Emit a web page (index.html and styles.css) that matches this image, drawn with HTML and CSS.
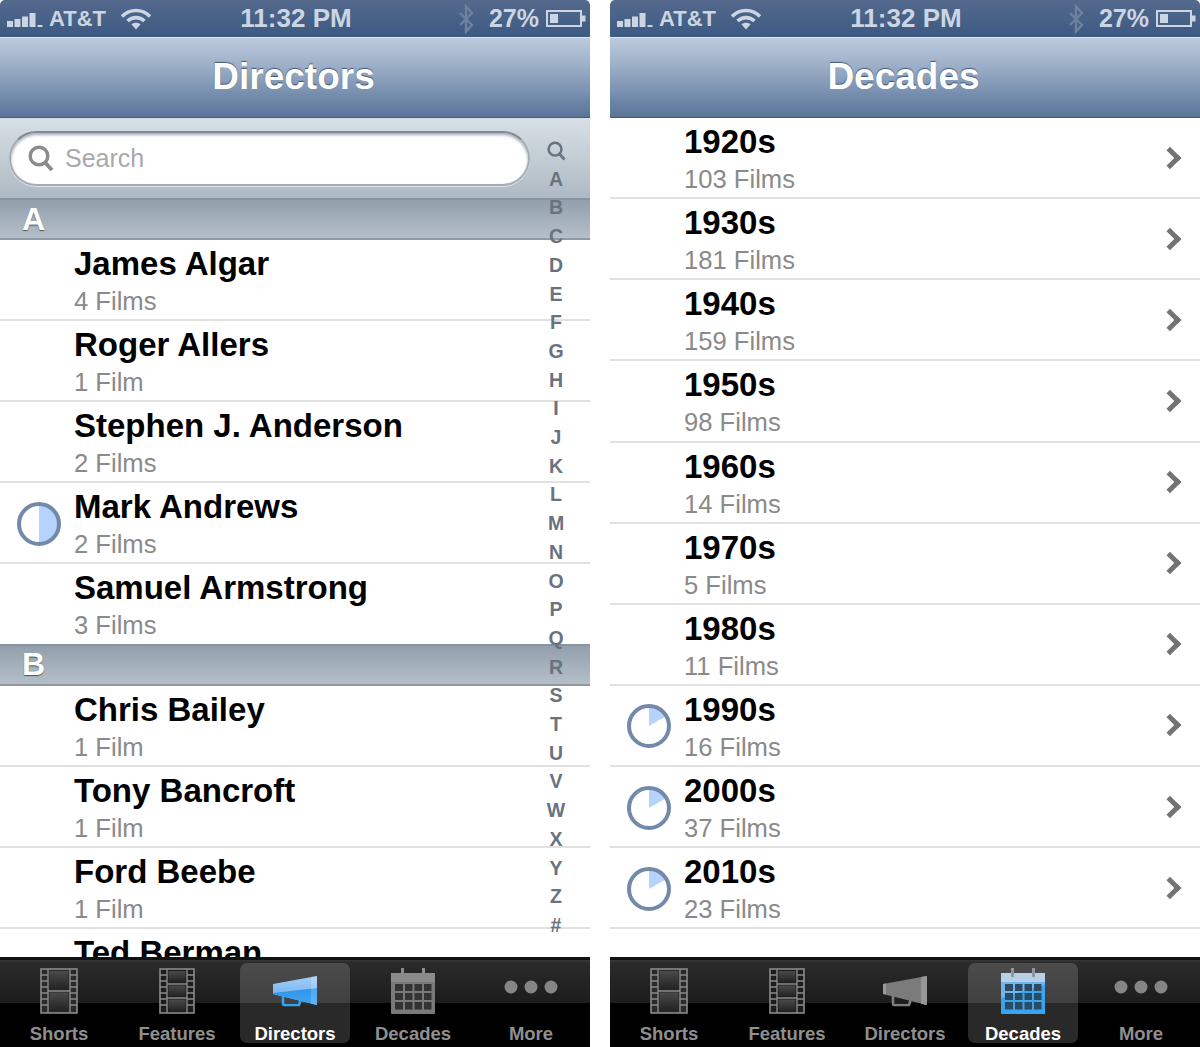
FILE: index.html
```html
<!DOCTYPE html>
<html lang="en">
<head>
<meta charset="utf-8">
<title>Directors and Decades</title>
<link rel="stylesheet" href="styles.css">
</head>
<body>
<svg class="sprite" width="0" height="0" aria-hidden="true">
  <defs>
    <linearGradient id="blue" x1="0" y1="0" x2="0" y2="1">
      <stop offset="0" stop-color="#a3cdf6"/><stop offset="1" stop-color="#62abf0"/>
    </linearGradient>
    <linearGradient id="blue2" x1="0" y1="0" x2="0" y2="1">
      <stop offset="0" stop-color="#2f93ec"/><stop offset="1" stop-color="#3fa6ef"/>
    </linearGradient>
    <linearGradient id="cell" x1="0" y1="0" x2="0" y2="1">
      <stop offset="0" stop-color="#4a4a4a"/><stop offset="1" stop-color="#222"/>
    </linearGradient>
    <symbol id="signal" viewBox="0 0 36 14">
      <rect x="0" y="8" width="6" height="6"/><rect x="7.5" y="6" width="6" height="8"/><rect x="15" y="3.5" width="6" height="10.5"/><rect x="22.5" y="0" width="6" height="14"/><rect x="30.5" y="12" width="5" height="2"/>
    </symbol>
    <symbol id="wifi" viewBox="0 0 30 22">
      <path d="M1 8.500C9 .5 21 .5 29 8.500" fill="none" stroke="currentColor" stroke-width="3.600"/>
      <path d="M6.500 13C11.500 8.500 18.500 8.500 23.500 13" fill="none" stroke="currentColor" stroke-width="3.600"/>
      <path d="M15 21.500l-4.600-5.200c2.700-2 6.500-2 9.200 0z" fill="currentColor"/>
    </symbol>
    <symbol id="bt" viewBox="0 0 16 28">
      <path d="M2 8l12 12-6 6.500V1.500l6 6.500L2 20" fill="none" stroke="currentColor" stroke-width="2.400"/>
    </symbol>
    <symbol id="battery" viewBox="0 0 40 17">
      <rect x="1" y="1" width="34" height="15" fill="none" stroke="currentColor" stroke-width="2"/>
      <rect x="4" y="4" width="8" height="9" fill="currentColor"/>
      <rect x="36" y="5.500" width="3.500" height="6" fill="currentColor"/>
    </symbol>
    <symbol id="film2" viewBox="0 0 38 46">
      <rect x="1" y="1" width="36" height="44" fill="#2a2a2a" stroke="#8a8a8a" stroke-width="1.600"/>
      <path d="M8 1v44M30 1v44M1 7h7M1 13h7M1 19h7M1 25h7M1 31h7M1 37h7M30 7h7M30 13h7M30 19h7M30 25h7M30 31h7M30 37h7M8 23h22" stroke="#8a8a8a" stroke-width="1.400" fill="none"/>
      <rect x="9.500" y="3" width="19" height="18.500" fill="url(#cell)"/>
      <rect x="9.500" y="24.500" width="19" height="18.500" fill="url(#cell)"/>
    </symbol>
    <symbol id="film3" viewBox="0 0 36 46">
      <rect x="1" y="1" width="34" height="44" fill="#1c1c1c" stroke="#8a8a8a" stroke-width="1.600"/>
      <path d="M8 1v44M28 1v44M1 7h7M1 13h7M1 19h7M1 25h7M1 31h7M1 37h7M28 7h7M28 13h7M28 19h7M28 25h7M28 31h7M28 37h7M8 16h20M8 30h20" stroke="#8a8a8a" stroke-width="1.400" fill="none"/>
      <rect x="9.500" y="3" width="17" height="11.500" fill="url(#cell)"/>
      <rect x="9.500" y="17.500" width="17" height="11" fill="url(#cell)"/>
      <rect x="9.500" y="31.500" width="17" height="12" fill="url(#cell)"/>
    </symbol>
    <symbol id="horn-off" viewBox="0 0 46 32">
      <path d="M11 20v9a1 1 0 0 0 1 1h15l2-6" fill="none" stroke="#7d7d7d" stroke-width="2.600"/>
      <path d="M1 9l44-8v29L1 19z" fill="#7b7b7b"/>
      <path d="M1 9l3-.5V19.600L1 19z" fill="#999"/>
      <path d="M39 2.100l6-1.100v29l-6-1.100z" fill="#979797"/>
    </symbol>
    <symbol id="horn-on" viewBox="0 0 46 32">
      <path d="M11 20v9a1 1 0 0 0 1 1h15l2-6" fill="none" stroke="#35a2ee" stroke-width="2.600"/>
      <path d="M1 9l44-8v29L1 19z" fill="url(#blue)"/>
      <path d="M1 18L45 13v17L1 19z" fill="url(#blue2)"/>
      <path d="M39 2.100l6-1.100v29l-6-1.100z" fill="#fff" opacity=".18"/>
    </symbol>
    <symbol id="cal-off" viewBox="0 0 44 46">
      <rect x="0" y="5" width="44" height="41" rx="1" fill="#797979"/>
      <rect x="0" y="5" width="44" height="9" fill="#8a8a8a"/>
      <rect x="10" y="0" width="3" height="9" fill="#8c8c8c"/><rect x="31" y="0" width="3" height="9" fill="#8c8c8c"/>
      <g fill="#333"><rect x="4" y="16" width="8" height="7"/><rect x="14" y="16" width="7.500" height="7"/><rect x="23.500" y="16" width="7.500" height="7"/><rect x="33" y="16" width="7.500" height="7"/>
      <rect x="4" y="25" width="8" height="7"/><rect x="14" y="25" width="7.500" height="7"/><rect x="23.500" y="25" width="7.500" height="7"/><rect x="33" y="25" width="7.500" height="7"/>
      <rect x="4" y="34" width="8" height="7.500"/><rect x="14" y="34" width="7.500" height="7.500"/><rect x="23.500" y="34" width="7.500" height="7.500"/><rect x="33" y="34" width="7.500" height="7.500"/></g>
    </symbol>
    <symbol id="cal-on" viewBox="0 0 44 46">
      <rect x="0" y="5" width="44" height="41" rx="1" fill="#6fb5ee"/>
      <path d="M0 46V30L44 17v29z" fill="#3aa5ef"/>
      <rect x="0" y="5" width="44" height="9" fill="#b8cfe8"/>
      <rect x="10" y="0" width="3" height="9" fill="#8b97a6"/><rect x="31" y="0" width="3" height="9" fill="#8b97a6"/>
      <g fill="#2d4a63"><rect x="4" y="16" width="8" height="7"/><rect x="14" y="16" width="7.500" height="7"/><rect x="23.500" y="16" width="7.500" height="7"/><rect x="33" y="16" width="7.500" height="7"/>
      <rect x="4" y="25" width="8" height="7"/><rect x="14" y="25" width="7.500" height="7"/><rect x="23.500" y="25" width="7.500" height="7"/><rect x="33" y="25" width="7.500" height="7"/>
      <rect x="4" y="34" width="8" height="7.500"/><rect x="14" y="34" width="7.500" height="7.500"/><rect x="23.500" y="34" width="7.500" height="7.500"/><rect x="33" y="34" width="7.500" height="7.500"/></g>
    </symbol>
    <symbol id="dots" viewBox="0 0 54 14">
      <circle cx="7" cy="7" r="6.500" fill="#858585"/><circle cx="27" cy="7" r="6.500" fill="#858585"/><circle cx="47" cy="7" r="6.500" fill="#858585"/>
    </symbol>
    <symbol id="half" viewBox="0 0 44 44">
      <path d="M22 22V2a20 20 0 0 1 0 40z" fill="#b5d3fb"/>
      <circle cx="22" cy="22" r="20" fill="none" stroke="#7389ac" stroke-width="4"/>
    </symbol>
    <symbol id="slice" viewBox="0 0 44 44">
      <path d="M22 22V2A20 20 0 0 1 39.300 12z" fill="#b5d3fb"/>
      <circle cx="22" cy="22" r="20" fill="none" stroke="#7389ac" stroke-width="4"/>
    </symbol>
    <symbol id="lens" viewBox="0 0 26 27">
      <circle cx="11" cy="11" r="8.800" fill="none" stroke="currentColor" stroke-width="3.400"/>
      <path d="M17 17.500l7 7.500" stroke="currentColor" stroke-width="4" fill="none"/>
    </symbol>
  </defs>
</svg>

<main class="screens">
  <section class="phone">
    <header class="status">
      <div class="status-left">
        <svg class="i-signal"><use href="#signal"/></svg><span class="carrier">AT&amp;T</span><svg class="i-wifi"><use href="#wifi"/></svg>
      </div>
      <div class="time">11:32 PM</div>
      <div class="status-right">
        <svg class="i-bt"><use href="#bt"/></svg><span class="pct">27%</span><svg class="i-batt"><use href="#battery"/></svg>
      </div>
    </header>
    <div class="nav"><h1 class="nav-title">Directors</h1></div>
    <div class="list">
      <div class="searchbar">
        <div class="field"><svg class="i-lens"><use href="#lens"/></svg><span class="placeholder">Search</span></div>
      </div>
      <div class="section">A</div>
      <div class="row"><div class="slot"></div><div class="txt"><div class="title">James Algar</div><div class="sub">4 Films</div></div></div>
      <div class="row"><div class="slot"></div><div class="txt"><div class="title">Roger Allers</div><div class="sub">1 Film</div></div></div>
      <div class="row"><div class="slot"></div><div class="txt"><div class="title">Stephen J. Anderson</div><div class="sub">2 Films</div></div></div>
      <div class="row"><div class="slot"><svg class="pie"><use href="#half"/></svg></div><div class="txt"><div class="title">Mark Andrews</div><div class="sub">2 Films</div></div></div>
      <div class="row no-line"><div class="slot"></div><div class="txt"><div class="title">Samuel Armstrong</div><div class="sub">3 Films</div></div></div>
      <div class="section">B</div>
      <div class="row"><div class="slot"></div><div class="txt"><div class="title">Chris Bailey</div><div class="sub">1 Film</div></div></div>
      <div class="row"><div class="slot"></div><div class="txt"><div class="title">Tony Bancroft</div><div class="sub">1 Film</div></div></div>
      <div class="row"><div class="slot"></div><div class="txt"><div class="title">Ford Beebe</div><div class="sub">1 Film</div></div></div>
      <div class="row"><div class="slot"></div><div class="txt"><div class="title">Ted Berman</div><div class="sub">1 Film</div></div></div>
      <div class="index">
        <svg class="i-lens-sm"><use href="#lens"/></svg>
        <span>A</span><span>B</span><span>C</span><span>D</span><span>E</span><span>F</span><span>G</span><span>H</span><span>I</span><span>J</span><span>K</span><span>L</span><span>M</span><span>N</span><span>O</span><span>P</span><span>Q</span><span>R</span><span>S</span><span>T</span><span>U</span><span>V</span><span>W</span><span>X</span><span>Y</span><span>Z</span><span>#</span>
      </div>
    </div>
    <nav class="tabs">
      <div class="tab"><svg class="i-film"><use href="#film2"/></svg><span class="tab-label">Shorts</span></div>
      <div class="tab"><svg class="i-film3"><use href="#film3"/></svg><span class="tab-label">Features</span></div>
      <div class="tab active"><svg class="i-horn"><use href="#horn-on"/></svg><span class="tab-label">Directors</span></div>
      <div class="tab"><svg class="i-cal"><use href="#cal-off"/></svg><span class="tab-label">Decades</span></div>
      <div class="tab"><svg class="i-dots"><use href="#dots"/></svg><span class="tab-label">More</span></div>
    </nav>
  </section>

  <section class="phone">
    <header class="status">
      <div class="status-left">
        <svg class="i-signal"><use href="#signal"/></svg><span class="carrier">AT&amp;T</span><svg class="i-wifi"><use href="#wifi"/></svg>
      </div>
      <div class="time">11:32 PM</div>
      <div class="status-right">
        <svg class="i-bt"><use href="#bt"/></svg><span class="pct">27%</span><svg class="i-batt"><use href="#battery"/></svg>
      </div>
    </header>
    <div class="nav"><h1 class="nav-title">Decades</h1></div>
    <div class="list">
      <div class="row"><div class="slot"></div><div class="txt"><div class="title">1920s</div><div class="sub">103 Films</div></div><div class="chev"></div></div>
      <div class="row"><div class="slot"></div><div class="txt"><div class="title">1930s</div><div class="sub">181 Films</div></div><div class="chev"></div></div>
      <div class="row"><div class="slot"></div><div class="txt"><div class="title">1940s</div><div class="sub">159 Films</div></div><div class="chev"></div></div>
      <div class="row"><div class="slot"></div><div class="txt"><div class="title">1950s</div><div class="sub">98 Films</div></div><div class="chev"></div></div>
      <div class="row"><div class="slot"></div><div class="txt"><div class="title">1960s</div><div class="sub">14 Films</div></div><div class="chev"></div></div>
      <div class="row"><div class="slot"></div><div class="txt"><div class="title">1970s</div><div class="sub">5 Films</div></div><div class="chev"></div></div>
      <div class="row"><div class="slot"></div><div class="txt"><div class="title">1980s</div><div class="sub">11 Films</div></div><div class="chev"></div></div>
      <div class="row"><div class="slot"><svg class="pie"><use href="#slice"/></svg></div><div class="txt"><div class="title">1990s</div><div class="sub">16 Films</div></div><div class="chev"></div></div>
      <div class="row"><div class="slot"><svg class="pie"><use href="#slice"/></svg></div><div class="txt"><div class="title">2000s</div><div class="sub">37 Films</div></div><div class="chev"></div></div>
      <div class="row"><div class="slot"><svg class="pie"><use href="#slice"/></svg></div><div class="txt"><div class="title">2010s</div><div class="sub">23 Films</div></div><div class="chev"></div></div>
    </div>
    <nav class="tabs">
      <div class="tab"><svg class="i-film"><use href="#film2"/></svg><span class="tab-label">Shorts</span></div>
      <div class="tab"><svg class="i-film3"><use href="#film3"/></svg><span class="tab-label">Features</span></div>
      <div class="tab"><svg class="i-horn"><use href="#horn-off"/></svg><span class="tab-label">Directors</span></div>
      <div class="tab active"><svg class="i-cal"><use href="#cal-on"/></svg><span class="tab-label">Decades</span></div>
      <div class="tab"><svg class="i-dots"><use href="#dots"/></svg><span class="tab-label">More</span></div>
    </nav>
  </section>
</main>
</body>
</html>
```

FILE: styles.css
```css
* { box-sizing: border-box; }
html, body { margin: 0; padding: 0; height: 100%; background: #fff; overflow: hidden; }
body { font-family: "Liberation Sans", Arial, sans-serif; }
.sprite { position: absolute; }
svg { display: block; }

.screens { display: flex; gap: 20px; height: 1047px; }
.phone { width: 590px; height: 1047px; display: flex; flex-direction: column; overflow: hidden; }

/* status bar */
.status {
  height: 37px; flex: none;
  display: grid; grid-template-columns: 1fr auto 1fr; align-items: center;
  background: linear-gradient(#54698c, #3c5a83);
  color: #ccd5e1; font-weight: bold;
  border-radius: 5px 5px 0 0;
}
.status-left { display: flex; align-items: center; padding-left: 7px; }
.i-signal { width: 36px; height: 14px; fill: #ccd5e1; margin-top: 3px; }
.carrier { font-size: 22px; margin-left: 6px; }
.i-wifi { width: 30px; height: 22px; margin-left: 15px; color: #ccd5e1; }
.time { font-size: 26px; font-weight: bold; padding-left: 2px; }
.status-right { display: flex; align-items: center; justify-content: flex-end; padding-right: 4px; }
.i-bt { width: 16px; height: 30px; color: #6d829f; }
.pct { font-size: 25px; margin-left: 15px; }
.i-batt { width: 40px; height: 17px; margin-left: 7px; color: #ccd5e1; }

/* nav */
.nav {
  height: 81px; flex: none;
  display: flex; align-items: center; justify-content: center;
  padding: 0 3px 2px 0;
  background: linear-gradient(#bccadd, #9dafc8 35%, #728aab 75%, #5a7499);
  border-top: 1px solid #dfe6ef;
  border-bottom: 1px solid #3f5a7f;
}
.nav-title {
  margin: 0; font-size: 37px; font-weight: bold; color: #fff; line-height: 1;
  text-shadow: 0 -1px 1px rgba(40, 60, 90, .75);
}

/* list */
.list { flex: 1; min-height: 0; overflow: hidden; position: relative; background: #fff; }

.searchbar {
  height: 80px; padding: 13px 60px 12px 9px;
  background: linear-gradient(#d7e0e6, #aeb9c3);
}
.field {
  height: 55px; border-radius: 28px; background: #fff;
  border: 2px solid #a4adb6; border-top-color: #7f8b97;
  box-shadow: inset 0 2px 3px rgba(60, 70, 80, .45), 0 1px 0 rgba(255, 255, 255, .6);
  display: flex; align-items: center; padding-left: 17px;
}
.i-lens { width: 26px; height: 27px; color: #8c8c8c; }
.placeholder { font-size: 25px; color: #a9a9a9; margin-left: 11px; }

.section {
  height: 41.600px; padding: 2px 0 0 22px;
  display: flex; align-items: center;
  font-size: 32px; font-weight: bold; color: #fff;
  background: linear-gradient(#929fac, #b5bfc8);
  border-top: 2px solid #8795a3;
  border-bottom: 2px solid #8d99a6;
  text-shadow: 0 1px 1px rgba(50, 60, 70, .8);
}
.row.no-line + .section { padding-top: 0; }

.row {
  height: 81.125px; display: flex; align-items: flex-start;
  border-bottom: 2px solid #e1e1e1;
}
.row.no-line { border-bottom: 0; height: 80px; }
.slot { width: 74px; flex: none; height: 100%; display: flex; align-items: center; padding-left: 17px; }
.pie { width: 44px; height: 44px; margin-top: 2px; }
.txt { flex: 1; min-width: 0; padding-top: 5px; }
.title { font-size: 33px; line-height: 38px; font-weight: bold; color: #000; }
.sub { font-size: 25.600px; line-height: 30px; margin-top: 3px; color: #8a8a8a; }

.chev {
  width: 16px; height: 16px; flex: none; align-self: center;
  margin-right: 22px;
  border-top: 5px solid #737373; border-right: 5px solid #737373;
  transform: rotate(45deg);
}

/* section index, floats over the list */
.index {
  position: absolute; top: 22px; left: 541px; width: 30px; height: 796px;
  display: flex; flex-direction: column; align-items: center; justify-content: space-between;
  font-size: 19.500px; font-weight: bold; line-height: 22px; color: #69737f;
}
.i-lens-sm { width: 19px; height: 20px; color: #69737f; margin-top: 1px; }

/* tab bar */
.tabs {
  height: 90px; flex: none;
  display: grid; grid-template-columns: repeat(5, 118px);
  background: linear-gradient(#383838 0, #2a2a2a 3px, #1c1c1c 43px, #000 43px);
  border-top: 3px solid #111;
  padding-top: 3px;
  box-shadow: 0 -1px 1px rgba(0, 0, 0, .35);
}
.tab {
  position: relative; display: flex; flex-direction: column; align-items: center;
  color: #8f8f8f; height: 80px; margin: 0 4px; border-radius: 7px;
}
.tab.active { background: rgba(255, 255, 255, .16); color: #fff; }
.tab-label { position: absolute; top: 60px; left: -4px; right: -4px; text-align: center; font-size: 18.500px; line-height: 22px; font-weight: bold; }
.i-film { width: 38px; height: 46px; margin-top: 5px; }
.i-film3 { width: 36px; height: 46px; margin-top: 5px; }
.i-horn { width: 46px; height: 32px; margin-top: 12px; }
.i-cal { width: 44px; height: 46px; margin-top: 5px; }
.i-dots { width: 54px; height: 14px; margin-top: 17px; }
```
